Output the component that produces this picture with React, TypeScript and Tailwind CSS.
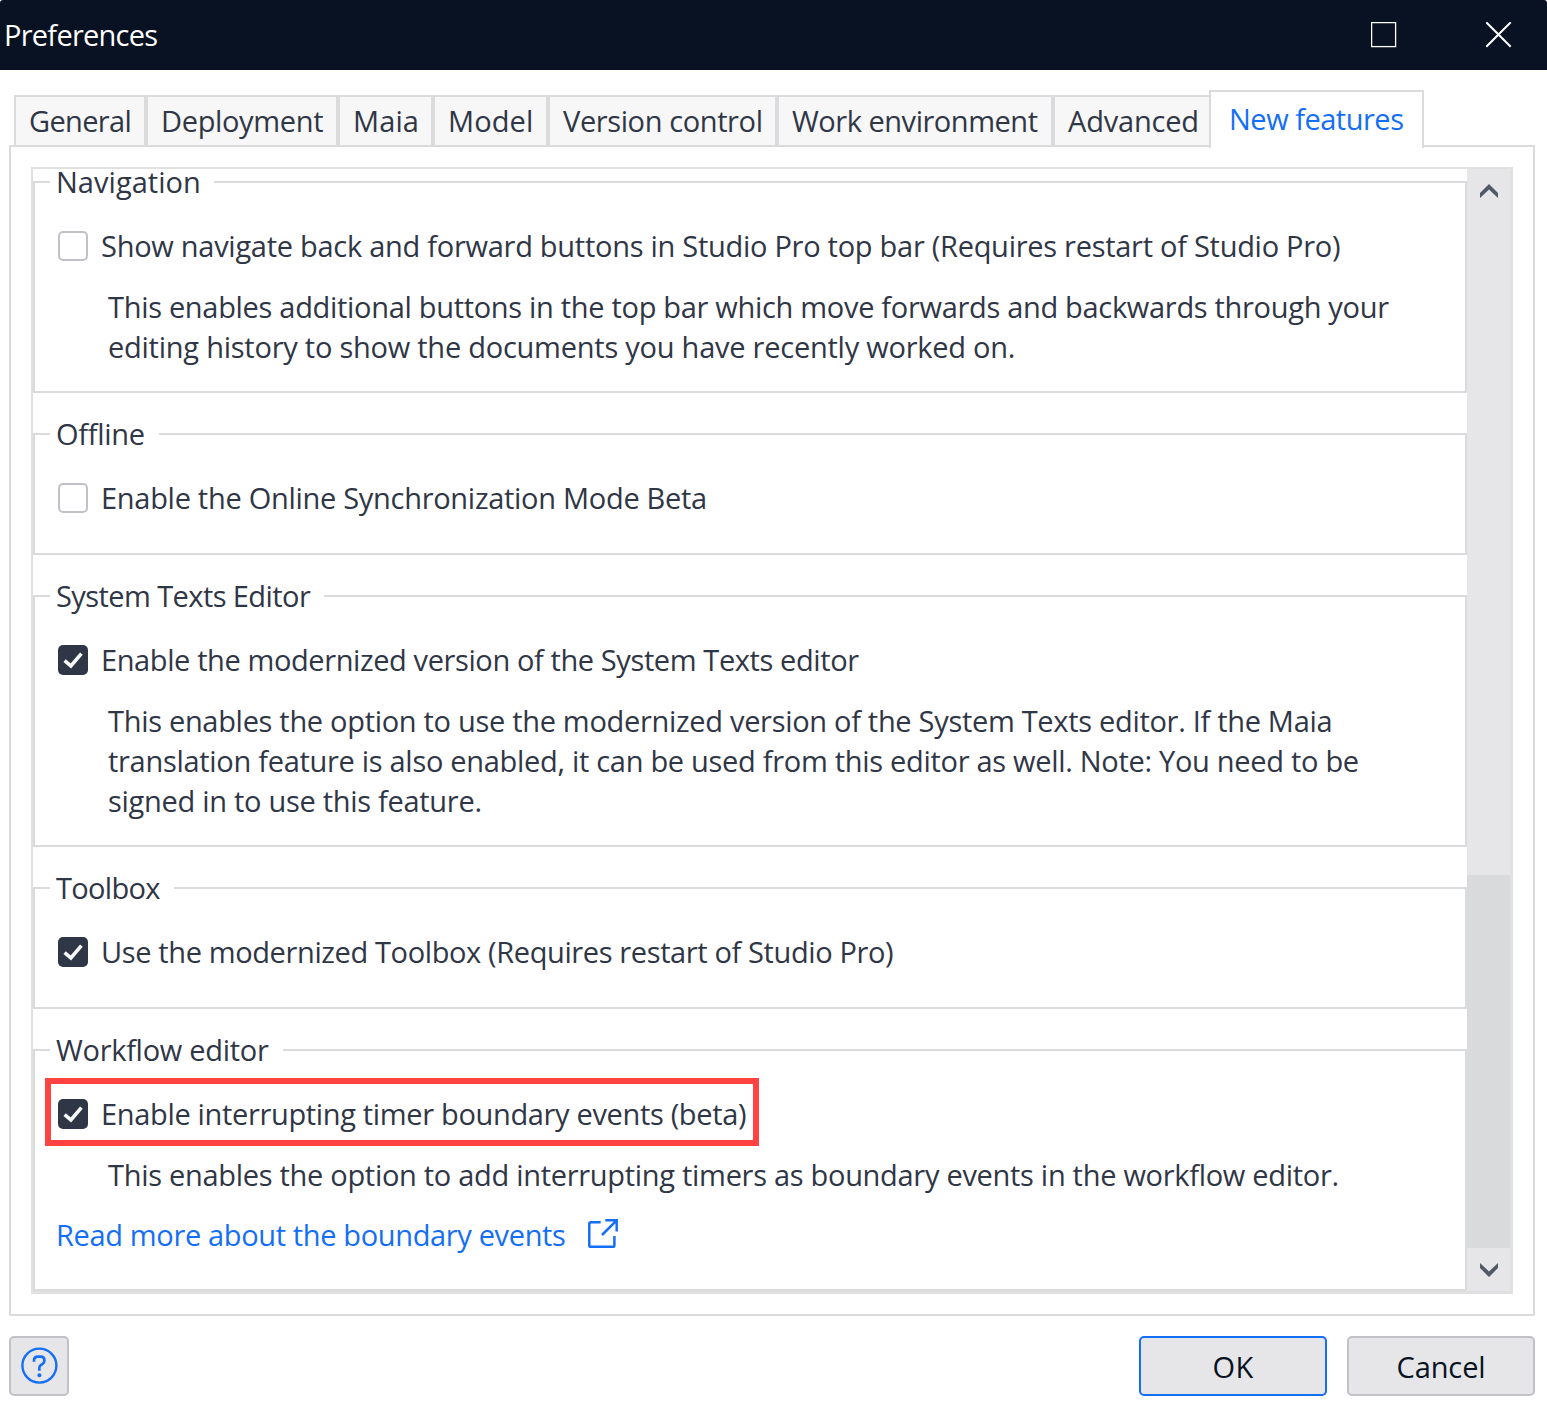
import type { ReactNode } from "react";

function Tab({ className, children }: { className: string; children: ReactNode }) {
  return (
    <div
      className={`h-[50px] shrink-0 border-2 border-b-0 border-[#dadbdc] bg-[#f7f7f7] pt-[4px] leading-[40px] whitespace-nowrap ${className}`}
    >
      {children}
    </div>
  );
}

function Checkbox({ checked }: { checked?: boolean }) {
  if (!checked) {
    return <span className="size-[30px] shrink-0 rounded-[5px] border-2 border-[#c1c1c8] bg-white" />;
  }
  return (
    <span className="size-[30px] shrink-0 rounded-[5px] bg-[#2f3646]">
      <svg viewBox="0 0 30 30" className="size-[30px]" fill="none" stroke="#f7f7f7" strokeWidth="3.6">
        <path d="M6.6 15.6 L12.9 20.9 L23.4 8.6" />
      </svg>
    </span>
  );
}

function Option({ checked, tracking, children }: { checked?: boolean; tracking: string; children: ReactNode }) {
  return (
    <div className="mt-8 ml-[23px] flex h-10 items-center gap-[13px]">
      <Checkbox checked={checked} />
      <span className={`whitespace-nowrap ${tracking}`}>{children}</span>
    </div>
  );
}

function Group({
  title,
  legend,
  className,
  children,
}: {
  title: string;
  legend: string;
  className: string;
  children: ReactNode;
}) {
  return (
    <section className={`shrink-0 border-2 border-[#dadbdc] ${className}`}>
      <div className={`mt-[-13px] ml-[15px] flex h-6 items-center bg-white pl-[6px] whitespace-nowrap ${legend}`}>
        {title}
      </div>
      {children}
    </section>
  );
}

function Line({ tracking, children }: { tracking: string; children: ReactNode }) {
  return <div className={`ml-[73px] h-10 whitespace-nowrap ${tracking}`}>{children}</div>;
}

export default function App() {
  return (
    <div className="flex h-[1404px] w-[1547px] flex-col overflow-hidden bg-white font-['Open_Sans','Noto_Sans',sans-serif] text-[29px] leading-[40px] text-[#2f3646]">
      <header className="flex h-[70px] shrink-0 items-center rounded-t-[3px] bg-[#091222] pr-[35px] pl-[4px] text-white">
        <span className="tracking-[-0.74px]">Preferences</span>
        <svg viewBox="0 0 26 26" className="ml-auto size-[26px]" fill="none" stroke="#fff" strokeWidth="1.3">
          <rect x="0.6" y="0.6" width="24" height="24" />
        </svg>
        <svg viewBox="0 0 26 26" className="ml-[89px] size-[26px]" fill="none" stroke="#fff" strokeWidth="2">
          <path d="M0.3 0.3 L24.7 24.7 M24.7 0.3 L0.3 24.7" />
        </svg>
      </header>

      <nav className="relative z-10 mt-5 ml-[14px] flex h-[55px] shrink-0 items-end">
        <Tab className="w-[132px] pl-[13px] tracking-[-0.65px]">General</Tab>
        <Tab className="w-[192px] pl-[13px] tracking-[-0.35px]">Deployment</Tab>
        <Tab className="w-[95px] pl-[13px] tracking-[0.1px]">Maia</Tab>
        <Tab className="w-[115px] pl-[13px] tracking-[0.1px]">Model</Tab>
        <Tab className="w-[229px] pl-[13px] tracking-[-0.39px]">Version control</Tab>
        <Tab className="w-[276px] pl-[13px] tracking-[-0.47px]">Work environment</Tab>
        <Tab className="w-[156px] border-r-0 pl-[13px] tracking-[-0.2px]">Advanced</Tab>
        <div className="mb-[-3px] h-[58px] w-[215px] border-2 border-b-0 border-[#dadbdc] bg-white pt-[7px] pl-[18px] tracking-[-0.49px] whitespace-nowrap text-[#146ff6]">
          New features
        </div>
      </nav>

      <main className="mr-[12px] ml-[9px] h-[1171px] shrink-0 border-2 border-[#dadbdc] p-5">
        <div className="flex h-[1127px] w-[1482px] border-t-2 border-r-3 border-b-3 border-l-2 border-[#e0e0e0]">
          <div className="flex w-[1434px] flex-col gap-10 pt-3">
            <Group title="Navigation" legend="w-[164px] tracking-[0.03px]" className="h-[212px]">
              <Option tracking="tracking-[-0.273px]">
                Show navigate back and forward buttons in Studio Pro top bar (Requires restart of Studio Pro)
              </Option>
              <div className="mt-[21px]">
                <Line tracking="tracking-[-0.307px]">
                  This enables additional buttons in the top bar which move forwards and backwards through your
                </Line>
                <Line tracking="tracking-[-0.242px]">
                  editing history to show the documents you have recently worked on.
                </Line>
              </div>
            </Group>

            <Group title="Offline" legend="w-[109px] tracking-[-0.3px]" className="h-[122px]">
              <Option tracking="tracking-[-0.29px]">Enable the Online Synchronization Mode Beta</Option>
            </Group>

            <Group title="System Texts Editor" legend="w-[274px] tracking-[-0.58px]" className="h-[252px]">
              <Option checked tracking="tracking-[-0.395px]">
                Enable the modernized version of the System Texts editor
              </Option>
              <div className="mt-[21px]">
                <Line tracking="tracking-[-0.305px]">
                  This enables the option to use the modernized version of the System Texts editor. If the Maia
                </Line>
                <Line tracking="tracking-[-0.297px]">
                  translation feature is also enabled, it can be used from this editor as well. Note: You need to be
                </Line>
                <Line tracking="tracking-[-0.29px]">signed in to use this feature.</Line>
              </div>
            </Group>

            <Group title="Toolbox" legend="w-[124px] tracking-[-0.7px]" className="h-[122px]">
              <Option checked tracking="tracking-[-0.378px]">
                Use the modernized Toolbox (Requires restart of Studio Pro)
              </Option>
            </Group>

            <Group title="Workflow editor" legend="w-[233px] tracking-[-0.29px]" className="h-[242px]">
              <div className="relative">
                <Option checked tracking="tracking-[-0.337px]">
                  Enable interrupting timer boundary events (beta)
                </Option>
                <div className="absolute top-[-16px] left-[10px] h-[68px] w-[714px] border-6 border-[#ff4242]" />
              </div>
              <div className="mt-[21px]">
                <Line tracking="tracking-[-0.295px]">
                  This enables the option to add interrupting timers as boundary events in the workflow editor.
                </Line>
              </div>
              <a className="mt-5 ml-[21px] flex h-10 items-center whitespace-nowrap text-[#146ff6]">
                <span className="w-[531px] tracking-[-0.355px]">Read more about the boundary events</span>
                <svg
                  viewBox="0 0 32 32"
                  className="size-8"
                  fill="none"
                  stroke="currentColor"
                  strokeWidth="2.5"
                >
                  <path d="M13.7 3.2 H4 Q2.3 3.2 2.3 4.8 V26.2 Q2.3 27.8 4 27.8 H25.7 Q27.4 27.8 27.4 26.2 V17" />
                  <path d="M18.3 1.3 H29.7 V12.6 M29.4 1.6 L15 16" />
                </svg>
              </a>
            </Group>
          </div>

          <div className="flex w-[43px] flex-col bg-[#e6e6e8]">
            <div className="flex h-[43px] justify-center pt-[15px]">
              <svg viewBox="0 0 18 14" className="h-[14px] w-[18px]" fill="#515966">
                <polygon points="0,9 9,0 18,9 18,14 9,5.4 0,14" />
              </svg>
            </div>
            <div className="mt-[663px] h-[373px] bg-[#d9dadc]" />
            <div className="flex h-[43px] justify-center pt-[15px]">
              <svg viewBox="0 0 18 14" className="h-[14px] w-[18px]" fill="#515966">
                <polygon points="0,0 9,8.6 18,0 18,5 9,14 0,5" />
              </svg>
            </div>
          </div>
        </div>
      </main>

      <footer className="mt-5 mr-[12px] ml-[9px] flex h-[60px] shrink-0 gap-5 text-[#091222]">
        <button className="flex size-[60px] items-center justify-center rounded-[5px] border-2 border-[#c1c1c8] bg-[#e6e6e8] text-[#146ff6]">
          <svg viewBox="0 0 38 38" className="size-[38px]" fill="none" stroke="currentColor">
            <circle cx="19.4" cy="18.6" r="17" strokeWidth="2.4" />
            <path
              d="M14 14.8 V13.6 Q14 9.7 18 9.7 H20.4 Q24.4 9.7 24.4 13.4 Q24.4 16 22.4 17.2 L20.8 18.2 Q19.3 19.2 19.3 21.2 V23.8"
              strokeWidth="2.7"
            />
            <circle cx="19.4" cy="28.2" r="2" fill="currentColor" stroke="none" />
          </svg>
        </button>
        <button className="ml-auto w-[188px] rounded-[5px] border-2 border-[#146ff6] bg-[#e6e6e8] pt-[1px] tracking-[0.3px]">
          OK
        </button>
        <button className="w-[188px] rounded-[5px] border-2 border-[#c1c1c8] bg-[#e6e6e8] pt-[1px] tracking-[-0.1px]">
          Cancel
        </button>
      </footer>
    </div>
  );
}
